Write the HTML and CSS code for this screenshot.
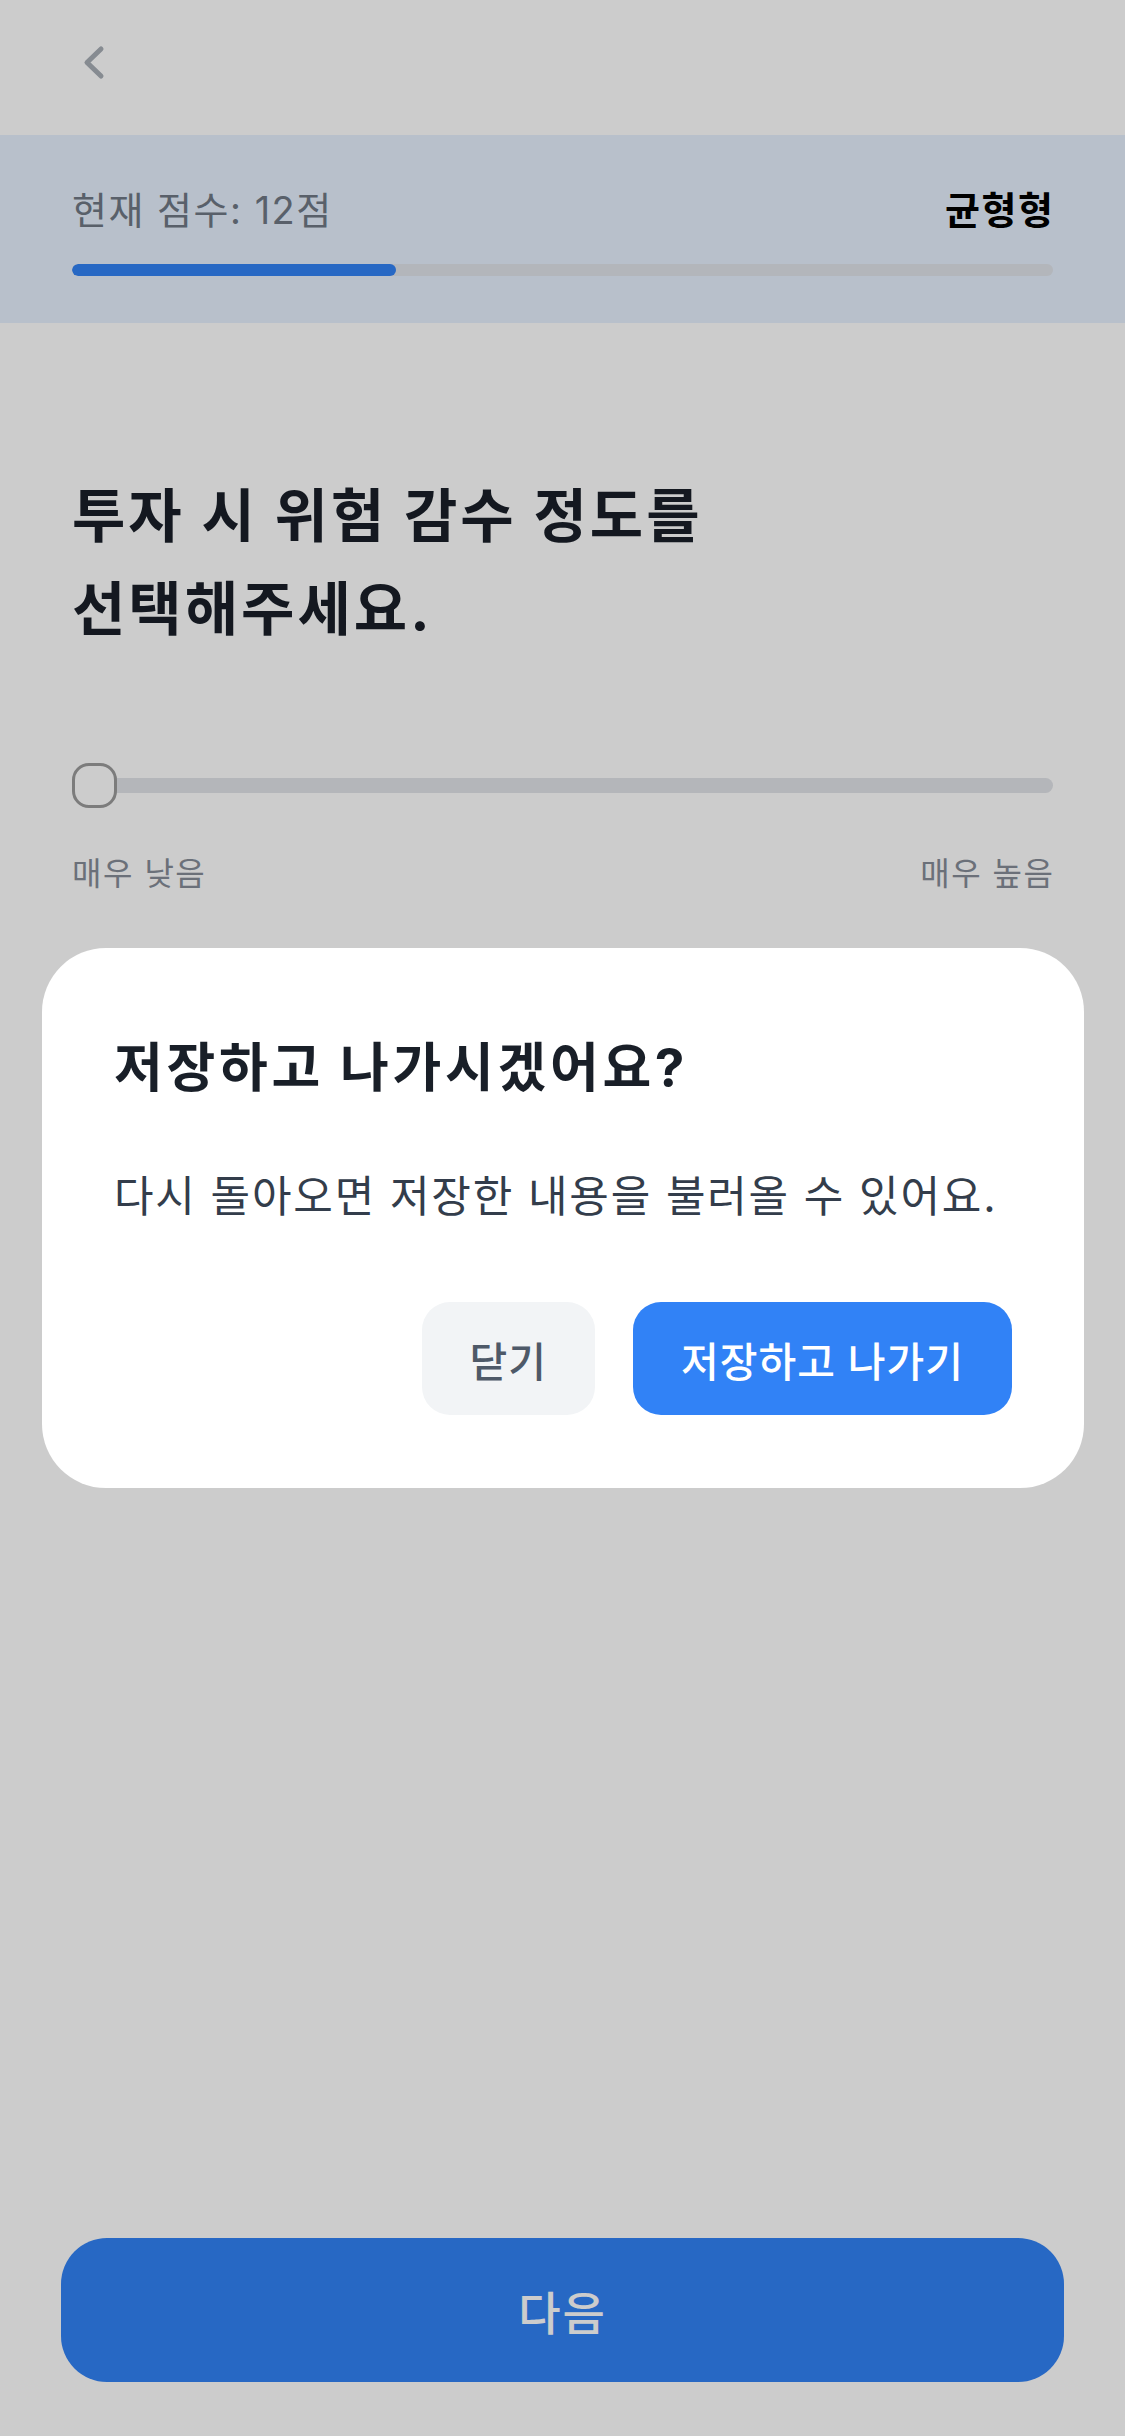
FILE: index.html
```html
<!DOCTYPE html>
<html lang="ko">
<head>
    <meta charset="UTF-8">
    <meta name="viewport" content="width=device-width, initial-scale=1.0">
    <title>투자 성향 진단</title>
    <link rel="stylesheet" href="styles.css">
</head>
<body>
    <div class="screen">
        <div class="nav">
            <button class="back-btn" aria-label="뒤로">
                <svg width="30" height="40" viewBox="0 0 30 40">
                    <path d="M21 7 L7 20.5 L21 34" fill="none" stroke="#a8aeb6" stroke-width="5" stroke-linecap="round" stroke-linejoin="round"/>
                </svg>
            </button>
        </div>

        <div class="score-band">
            <div class="score-row">
                <span class="score-label">현재 점수: 12점</span>
                <span class="score-type">균형형</span>
            </div>
            <div class="progress">
                <div class="progress-fill" style="width: 33%"></div>
            </div>
        </div>

        <div class="question">
            <h1>투자 시 위험 감수 정도를<br>선택해주세요.</h1>

            <div class="slider">
                <div class="slider-track"></div>
                <div class="slider-thumb"></div>
            </div>
            <div class="slider-labels">
                <span>매우 낮음</span>
                <span>매우 높음</span>
            </div>
        </div>

        <div class="bottom">
            <button class="btn-next">다음</button>
        </div>
    </div>

    <div class="overlay">
        <div class="dialog">
            <h2>저장하고 나가시겠어요?</h2>
            <p>다시 돌아오면 저장한 내용을 불러올 수 있어요.</p>
            <div class="dialog-actions">
                <button class="btn-close">닫기</button>
                <button class="btn-save">저장하고 나가기</button>
            </div>
        </div>
    </div>
</body>
</html>
```

FILE: styles.css
```css
body {
    margin: 0;
    background-color: #fff;
    font-family: Inter, "Noto Sans CJK KR", sans-serif;
    color: #191f28;
}
button {
    font-family: inherit;
    border: none;
    cursor: pointer;
}
.screen {
    min-height: 100vh;
    display: flex;
    flex-direction: column;
}
.nav {
    height: 135px;
    padding: 42px 0 0 80px;
    box-sizing: border-box;
}
.back-btn {
    background: none;
    padding: 0;
    display: block;
}
.back-btn svg {
    display: block;
}
.score-band {
    background-color: #e6f1fe;
    padding: 50px 72px 47px;
}
.score-row {
    display: flex;
    justify-content: space-between;
    font-size: 38px;
    line-height: 50px;
    letter-spacing: 1.5px;
}
.score-label {
    color: #707985;
}
.score-type {
    font-weight: bold;
    color: #000;
    margin-right: -1.5px;
}
.progress {
    margin-top: 29px;
    height: 12px;
    border-radius: 6px;
    background-color: #e0e4ea;
    overflow: hidden;
}
.progress-fill {
    height: 100%;
    border-radius: 6px;
    background-color: #3182f6;
}
.question {
    padding: 0 72px;
    margin-top: 147px;
}
.question h1 {
    margin: 0;
    font-size: 58px;
    line-height: 93px;
    font-weight: bold;
    letter-spacing: 3px;
    color: #191f28;
}
.slider {
    position: relative;
    margin-top: 107px;
    height: 45px;
    display: flex;
    align-items: center;
}
.slider-track {
    flex: 1;
    height: 15px;
    border-radius: 8px;
    background-color: #e2e4e9;
}
.slider-thumb {
    position: absolute;
    left: 0;
    top: 0;
    width: 45px;
    height: 45px;
    box-sizing: border-box;
    border: 3px solid #9b9b9b;
    border-radius: 17px;
    background-color: #fff;
}
.slider-labels {
    margin-top: 45px;
    display: flex;
    justify-content: space-between;
    font-size: 32px;
    line-height: 42px;
    letter-spacing: 1.5px;
    color: #868d98;
}
.slider-labels span:last-child {
    margin-right: -1.5px;
}
.bottom {
    margin-top: auto;
    padding: 0 61px 54px;
}
.btn-next {
    width: 100%;
    height: 144px;
    border-radius: 46px;
    background-color: #3182f6;
    color: #fff;
    font-size: 46px;
    font-weight: 500;
    letter-spacing: 2px;
}
.overlay {
    position: fixed;
    inset: 0;
    background-color: rgba(0, 0, 0, 0.2);
    display: flex;
    align-items: center;
    padding: 0 41px 0 42px;
}
.dialog {
    width: 100%;
    box-sizing: border-box;
    background-color: #fff;
    border-radius: 64px;
    padding: 86px 72px 73px;
}
.dialog h2 {
    margin: 0;
    font-size: 53px;
    line-height: 68px;
    font-weight: bold;
    letter-spacing: 3.7px;
    color: #191f28;
}
.dialog p {
    margin: 66px 0 0;
    font-size: 43px;
    line-height: 56px;
    letter-spacing: 1.8px;
    color: #333d4b;
    white-space: nowrap;
}
.dialog-actions {
    margin-top: 78px;
    display: flex;
    justify-content: flex-end;
    gap: 38px;
}
.dialog-actions button {
    height: 113px;
    padding: 0 48px;
    border-radius: 28px;
    font-size: 41px;
    font-weight: 500;
    letter-spacing: 1px;
}
.btn-close {
    background-color: #f2f4f6;
    color: #4e5968;
}
.btn-save {
    background-color: #3182f6;
    color: #fff;
}
```
